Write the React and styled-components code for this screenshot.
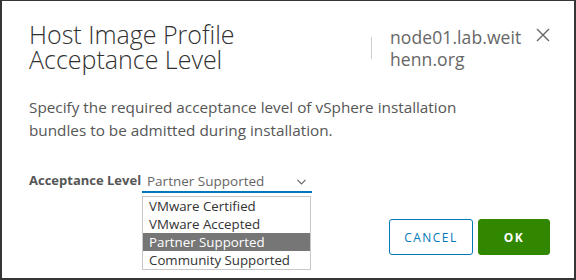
import React from 'react';
import styled, { createGlobalStyle } from 'styled-components';

const Global = createGlobalStyle`
	html, body {
		margin: 0;
		padding: 0;
		background: #353535;
	}
	body {
		font-family: "Open Sans", "Noto Sans", sans-serif;
	}
`;

const Frame = styled.div`
	padding: 1px 2px 2px 2px;
	height: 280px;
	box-sizing: border-box;
`;

const Dialog = styled.div`
	background: #ffffff;
	height: 277px;
	box-sizing: border-box;
	padding: 21px 24px 0 27px;
	display: flex;
	flex-direction: column;
	position: relative;
`;

const Header = styled.div`
	display: flex;
	align-items: flex-start;
`;

const Title = styled.h3`
	flex: 1;
	margin: 0;
	font-size: 25px;
	line-height: 25px;
	font-weight: 300;
	color: #313131;
`;

const HostBox = styled.div`
	display: flex;
	align-items: center;
	margin-top: 4px;
`;

const Divider = styled.span`
	width: 1px;
	height: 22px;
	background: #cccccc;
	margin-right: 18px;
`;

const HostName = styled.div`
	font-size: 17.5px;
	line-height: 22px;
	letter-spacing: 0.1px;
	color: #666666;
	width: 134px;
	white-space: nowrap;
`;

const Close = styled.button`
	border: none;
	background: none;
	padding: 0;
	margin: 6px 0 0 12px;
	width: 14px;
	height: 14px;
	display: flex;
	cursor: pointer;
`;

const Description = styled.p`
	margin: 24px 0 0 0;
	font-size: 15.3px;
	line-height: 23px;
	color: #565656;
`;

const FormRow = styled.div`
	display: flex;
	align-items: flex-end;
	margin-top: 29px;
	position: relative;
`;

const Label = styled.label`
	font-size: 13px;
	font-weight: 700;
	color: #565656;
	width: 113px;
	padding-bottom: 4px;
	white-space: nowrap;
`;

const Select = styled.div`
	width: 170px;
	height: 21px;
	box-sizing: border-box;
	border-bottom: 2px solid #0079b8;
	display: flex;
	align-items: flex-start;
	justify-content: space-between;
	padding: 0 6px 0 5px;
	font-size: 13.5px;
	color: #666666;
`;

const Menu = styled.ul`
	position: absolute;
	left: 113px;
	top: 25px;
	width: 169px;
	box-sizing: border-box;
	margin: 0;
	padding: 0;
	list-style: none;
	border: 1px solid #c8c8c8;
	background: #ffffff;
	z-index: 2;
`;

const Option = styled.li`
	height: 18px;
	line-height: 18px;
	padding-left: 6px;
	font-size: 13.3px;
	color: ${p => (p.$active ? '#ffffff' : '#333333')};
	background: ${p => (p.$active ? '#767676' : 'transparent')};
`;

const Footer = styled.div`
	display: flex;
	justify-content: flex-end;
	gap: 5px;
	margin-top: 26px;
`;

const Button = styled.button`
	height: 36px;
	min-width: ${p => p.$w}px;
	box-sizing: border-box;
	border-radius: 3px;
	font-family: inherit;
	font-size: 12px;
	letter-spacing: 0.12em;
	font-weight: ${p => (p.$primary ? 700 : 500)};
	color: ${p => (p.$primary ? '#ffffff' : '#0079b8')};
	background: ${p => (p.$primary ? '#318700' : '#ffffff')};
	border: 1px solid ${p => (p.$primary ? '#318700' : '#0079b8')};
	cursor: pointer;
`;

const options = ['VMware Certified', 'VMware Accepted', 'Partner Supported', 'Community Supported'];

export default function App() {
	const value = 'Partner Supported';

	return (
		<Frame>
			<Global />
			<Dialog>
				<Header>
					<Title>
						Host Image Profile
						<br />
						Acceptance Level
					</Title>
					<HostBox>
						<Divider />
						<HostName>
							node01.lab.weit
							<br />
							henn.org
						</HostName>
					</HostBox>
					<Close aria-label="Close">
						<svg width="14" height="14" viewBox="0 0 14 14">
							<path d="M1 1 L13 13 M13 1 L1 13" stroke="#666" strokeWidth="1.4" fill="none" />
						</svg>
					</Close>
				</Header>
				<Description>
					Specify the required acceptance level of vSphere installation
					<br />
					bundles to be admitted during installation.
				</Description>
				<FormRow>
					<Label>Acceptance Level</Label>
					<Select>
						<span>{value}</span>
						<svg width="9" height="6" viewBox="0 0 9 6" style={{ marginTop: 7 }}>
							<path d="M0.5 0.8 L4.5 4.8 L8.5 0.8" stroke="#666" strokeWidth="1.2" fill="none" />
						</svg>
					</Select>
					<Menu>
						{options.map(o => (
							<Option key={o} $active={o === value}>
								{o}
							</Option>
						))}
					</Menu>
				</FormRow>
				<Footer>
					<Button $w={84}>CANCEL</Button>
					<Button $w={72} $primary>
						OK
					</Button>
				</Footer>
			</Dialog>
		</Frame>
	);
}
